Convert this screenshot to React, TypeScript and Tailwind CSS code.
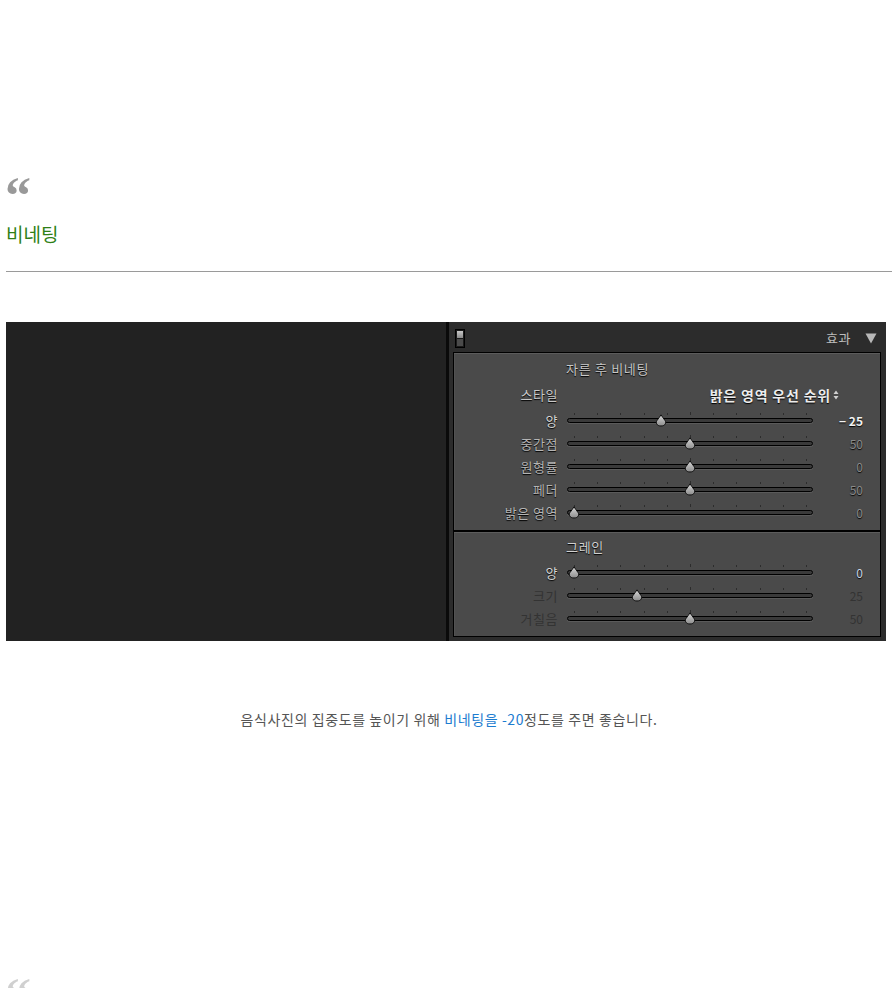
import React from "react";

const KR = "font-['Noto_Sans_CJK_KR','Noto_Sans',sans-serif]";

interface SliderRowProps {
  label: string;
  value: string;
  pos: number; // 0..1
  tone: "light" | "mid" | "dim";
  valueTone?: "white" | "blue" | "mid" | "dim";
}

const labelColor = {
  light: "text-[#d6d6d6]",
  mid: "text-[#b4b4b4]",
  dim: "text-[#333333]",
};

const valueColor = {
  white: "text-[#f2f2f2] font-bold",
  blue: "text-[#c9d6e6]",
  mid: "text-[#8a8a8a]",
  dim: "text-[#333333]",
};

const ticks = [0, 1, 2, 3, 4, 5, 6, 7, 8, 9, 10];

const Track = ({ pos }: { pos: number }) => (
  <div className="relative w-[246px] h-full">
    {ticks.map((t) => (
      <div
        key={t}
        className={`absolute w-px bg-[#2c2c2c] ${t === 5 ? "h-[3px] top-[3px]" : "h-[2px] top-[4px]"}`}
        style={{ left: 7 + t * 23.2 }}
      />
    ))}
    <div className="absolute left-0 right-0 top-[9px] h-[5px] rounded-full border border-black bg-[#3a3a3a] shadow-[0_1px_0_#5a5a5a]" />
    <svg
      className="absolute top-[5px]"
      style={{ left: 7 + pos * 232 - 6 }}
      width="12"
      height="13"
      viewBox="0 0 12 13"
    >
      <defs>
        <linearGradient id="thumb" x1="0" y1="0" x2="0" y2="1">
          <stop offset="0" stopColor="#d8d8d8" />
          <stop offset="1" stopColor="#8c8c8c" />
        </linearGradient>
      </defs>
      <path
        d="M6 0.8 C7 2.5 8.5 4.5 10 6.5 C11.5 8.5 10.5 12 6 12 C1.5 12 0.5 8.5 2 6.5 C3.5 4.5 5 2.5 6 0.8 Z"
        fill="url(#thumb)"
        stroke="#111"
        strokeWidth="1"
      />
    </svg>
  </div>
);

const SliderRow = ({ label, value, pos, tone, valueTone = "mid" }: SliderRowProps) => (
  <div className="flex items-center h-[23px]">
    <div className={`w-[104px] text-right text-[13px] leading-none tracking-[0.5px] ${labelColor[tone]}`}>{label}</div>
    <div className="ml-[9px] h-full">
      <Track pos={pos} />
    </div>
    <div className={`w-[50px] text-right text-[12px] leading-none ${valueColor[valueTone]}`}>{value}</div>
  </div>
);

const Panel = () => (
  <div className="flex-1 bg-[#2c2c2c] pl-[4px] pr-[5px] pb-[4px] flex flex-col">
    <div className="h-[30px] flex items-center justify-between pl-[2px] pr-[4px] pt-[2px]">
      <div className="w-[10px] h-[19px] border border-black bg-[#1a1a1a] flex flex-col p-px">
        <div className="flex-1 bg-gradient-to-b from-[#c8c8c8] to-[#8a8a8a]" />
        <div className="flex-1 bg-[#4a4a4a] mt-px" />
      </div>
      <div className="flex items-center gap-[14px]">
        <span className="text-[13px] tracking-[0.5px] text-[#bdbdbd]">효과</span>
        <svg width="12" height="11" viewBox="0 0 12 11">
          <path d="M0.5 0.5 H11.5 L6 10.5 Z" fill="#b8b8b8" />
        </svg>
      </div>
    </div>
    <div className="flex-1 border border-black flex flex-col [text-shadow:0_1px_1px_#000]">
      <div className="h-[177px] bg-[#4a4a4a] shadow-[inset_0_1px_0_#5c5c5c,inset_1px_0_0_#525252] pt-[6px]">
        <div className="h-[20px] pl-[112px] flex items-center text-[13px] tracking-[0.7px] text-[#c8c8c8]">자른 후 비네팅</div>
        <div className="h-[20px] mt-[6px] flex items-center">
          <div className="w-[104px] text-right text-[13px] tracking-[0.5px] text-[#c8c8c8]">스타일</div>
          <div className="flex-1 flex justify-end items-center pr-[41px] text-[14px] tracking-[0.8px] font-bold text-[#ececec]">
            밝은 영역 우선 순위
            <svg className="ml-[2px]" width="6" height="10" viewBox="0 0 6 10">
              <path d="M3 0.5 L5.5 4 H0.5 Z M3 9.5 L5.5 6 H0.5 Z" fill="#d0d0d0" />
            </svg>
          </div>
        </div>
        <div className="mt-[4px]">
          <SliderRow label="양" value="− 25" pos={0.375} tone="light" valueTone="white" />
          <SliderRow label="중간점" value="50" pos={0.5} tone="mid" />
          <SliderRow label="원형률" value="0" pos={0.5} tone="mid" />
          <SliderRow label="페더" value="50" pos={0.5} tone="mid" />
          <SliderRow label="밝은 영역" value="0" pos={0} tone="mid" />
        </div>
      </div>
      <div className="h-[2px] bg-black" />
      <div className="flex-1 bg-[#4a4a4a] shadow-[inset_0_1px_0_#5c5c5c,inset_1px_0_0_#525252] pt-[5px]">
        <div className="h-[20px] pl-[112px] flex items-center text-[13px] tracking-[0.7px] text-[#d0d0d0]">그레인</div>
        <div className="mt-[4px]">
          <SliderRow label="양" value="0" pos={0} tone="light" valueTone="blue" />
          <div className="[text-shadow:none]">
            <SliderRow label="크기" value="25" pos={0.27} tone="dim" valueTone="dim" />
            <SliderRow label="거칠음" value="50" pos={0.5} tone="dim" valueTone="dim" />
          </div>
        </div>
      </div>
    </div>
  </div>
);

export default function App() {
  return (
    <div className={`bg-white min-h-[988px] overflow-hidden pl-[6px] ${KR}`}>
      <div className="h-[170px]" />
      <div className="h-[40px] text-[52px] leading-none font-bold text-[#999] font-['Liberation_Serif',serif] -ml-[1px]">
        “
      </div>
      <div className="mt-[10px] text-[19px] leading-[28px] text-[#2f7f17]">비네팅</div>
      <hr className="mt-[23px] border-0 h-px bg-[#9a9a9a]" />
      <div className="mt-[50px] w-[880px] h-[319px] flex">
        <div className="w-[440px] bg-[#222222]" />
        <div className="w-[3px] bg-[#0a0a0a]" />
        <Panel />
      </div>
      <p className="mt-[68px] text-center text-[14px] leading-[20px] tracking-[0.6px] text-[#555]">
        음식사진의 집중도를 높이기 위해 <span className="text-[#1c7cd0]">비네팅을 -20</span>정도를 주면 좋습니다.
      </p>
      <div className="mt-[242px] text-[52px] leading-none font-bold text-[#d0d0d0] font-['Liberation_Serif',serif] -ml-[1px]">
        “
      </div>
    </div>
  );
}
